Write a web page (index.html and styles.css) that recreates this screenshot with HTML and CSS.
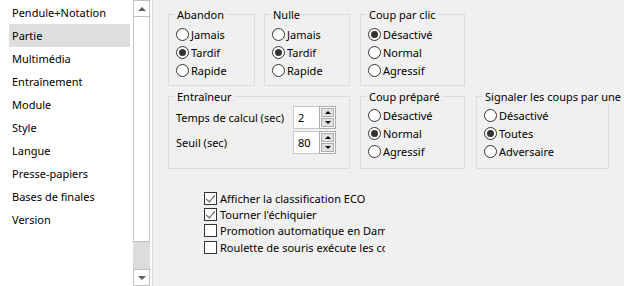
FILE: index.html
```html
<!DOCTYPE html>
<html lang="fr">
<head>
<meta charset="utf-8">
<title>Options</title>
<link rel="stylesheet" href="styles.css">
</head>
<body>
<div class="dialog">
  <div class="listbox">
    <ul class="items">
      <li>Pendule+Notation</li>
      <li class="selected">Partie</li>
      <li>Multimédia</li>
      <li>Entraînement</li>
      <li>Module</li>
      <li>Style</li>
      <li>Langue</li>
      <li>Presse-papiers</li>
      <li>Bases de finales</li>
      <li>Version</li>
    </ul>
    <div class="scrollbar">
      <div class="sb-btn"><span class="tri-up"></span></div>
      <div class="sb-thumb"></div>
      <div class="sb-track"></div>
      <div class="sb-btn"><span class="tri-down"></span></div>
    </div>
  </div>
  <div class="panel">
    <div class="row row1">
      <fieldset class="group w-abandon">
        <legend>Abandon</legend>
        <div class="opt"><span class="radio"></span>Jamais</div>
        <div class="opt"><span class="radio on"></span>Tardif</div>
        <div class="opt"><span class="radio"></span>Rapide</div>
      </fieldset>
      <fieldset class="group w-nulle">
        <legend>Nulle</legend>
        <div class="opt"><span class="radio"></span>Jamais</div>
        <div class="opt"><span class="radio on"></span>Tardif</div>
        <div class="opt"><span class="radio"></span>Rapide</div>
      </fieldset>
      <fieldset class="group w-mid">
        <legend>Coup par clic</legend>
        <div class="opt"><span class="radio on"></span>Désactivé</div>
        <div class="opt"><span class="radio"></span>Normal</div>
        <div class="opt"><span class="radio"></span>Agressif</div>
      </fieldset>
    </div>
    <div class="row row2">
      <fieldset class="group w-coach">
        <legend>Entraîneur</legend>
        <div class="field">
          <span class="field-label">Temps de calcul (sec)</span>
          <div class="spin"><span class="spin-edit">2</span><span class="spin-btns"><span class="spin-b"><span class="s-up"></span></span><span class="spin-b"><span class="s-down"></span></span></span></div>
        </div>
        <div class="field">
          <span class="field-label">Seuil (sec)</span>
          <div class="spin"><span class="spin-edit">80</span><span class="spin-btns"><span class="spin-b"><span class="s-up"></span></span><span class="spin-b"><span class="s-down"></span></span></span></div>
        </div>
      </fieldset>
      <fieldset class="group w-mid">
        <legend>Coup préparé</legend>
        <div class="opt"><span class="radio"></span>Désactivé</div>
        <div class="opt"><span class="radio on"></span>Normal</div>
        <div class="opt"><span class="radio"></span>Agressif</div>
      </fieldset>
      <fieldset class="group w-signal">
        <legend class="wide">Signaler les coups par une</legend>
        <div class="opt"><span class="radio"></span>Désactivé</div>
        <div class="opt"><span class="radio on"></span>Toutes</div>
        <div class="opt"><span class="radio"></span>Adversaire</div>
      </fieldset>
    </div>
    <div class="checks">
      <div class="chk"><span class="box on"></span>Afficher la classification ECO</div>
      <div class="chk"><span class="box on"></span>Tourner l'échiquier</div>
      <div class="chk"><span class="box"></span>Promotion automatique en Dame</div>
      <div class="chk"><span class="box"></span>Roulette de souris exécute les coups</div>
    </div>
  </div>
</div>
</body>
</html>
```
FILE: styles.css
```css
html, body {
  margin: 0;
  padding: 0;
  background: #f0f0f0;
}
body {
  font-family: "Noto Sans", "DejaVu Sans", sans-serif;
  font-size: 11px;
  color: #000;
}
.dialog {
  display: flex;
  width: 624px;
  height: 286px;
  overflow: hidden;
}

/* list box */
.listbox {
  display: flex;
  width: 152px;
  height: 286px;
  background: #fff;
  border-right: 1px solid #d9d9d9;
  box-sizing: content-box;
}
.items {
  list-style: none;
  margin: 0;
  padding: 1px 3px 0 9px;
  width: 133px;
  box-sizing: border-box;
}
.items li {
  height: 23px;
  line-height: 23px;
  padding-left: 3px;
  white-space: nowrap;
}
.items li.selected {
  background: #dedede;
}
.scrollbar {
  display: flex;
  flex-direction: column;
  width: 17px;
  height: 286px;
}
.sb-btn {
  height: 17px;
  border: 1px solid #c2c2c2;
  box-sizing: border-box;
  background: #fff;
  display: flex;
  align-items: center;
  justify-content: center;
}
.sb-thumb {
  height: 225px;
  border: 1px solid #c2c2c2;
  border-top: 0;
  box-sizing: border-box;
  background: #fff;
}
.sb-track {
  flex: 1;
  background: #dcdcdc;
}
.tri-up {
  width: 0; height: 0;
  border-left: 4px solid transparent;
  border-right: 4px solid transparent;
  border-bottom: 4px solid #606060;
}
.tri-down {
  width: 0; height: 0;
  border-left: 4px solid transparent;
  border-right: 4px solid transparent;
  border-top: 4px solid #606060;
}

/* right panel */
.panel {
  flex: 1;
  display: flex;
  flex-direction: column;
  padding: 6px 0 0 15px;
}
.row {
  display: flex;
  align-items: flex-start;
}
.row1 { gap: 9px; }
.row1 .w-nulle { margin-right: 1px; }
.row2 { margin-top: 2px; gap: 10px; }
.row2 .w-mid { margin-right: 1px; }

.group {
  margin: 0;
  border: 1px solid #dcdcdc;
  padding: 2px 4px 0 7px;
  min-width: 0;
  min-inline-size: 0;
  box-sizing: border-box;
}
.row1 .group { height: 80px; }
.row2 .group { height: 81px; padding-top: 1px; }
.group legend {
  padding: 0 2px;
  margin-left: -1px;
  line-height: 17px;
  height: 17px;
  white-space: nowrap;
}
.group legend.wide {
  width: max-content;
}
.w-abandon { width: 87px; }
.w-nulle { width: 86px; }
.w-mid { width: 105px; }
.w-coach { width: 182px; }
.w-signal { width: 133px; overflow: visible; }

.opt {
  display: flex;
  align-items: center;
  height: 18px;
  white-space: nowrap;
}
.radio {
  width: 13px;
  height: 13px;
  box-sizing: border-box;
  border: 1px solid #333;
  border-radius: 50%;
  background: #fff;
  margin-right: 2px;
  flex: none;
  display: flex;
  align-items: center;
  justify-content: center;
}
.radio.on::after {
  content: "";
  width: 7px;
  height: 7px;
  border-radius: 50%;
  background: #333;
}

/* spinner fields */
.w-coach { padding-top: 3px; }
.field {
  display: flex;
  align-items: center;
  height: 23px;
  margin-bottom: 2px;
}
.field-label {
  width: 117px;
  white-space: nowrap;
}
.spin {
  display: flex;
  height: 23px;
}
.spin-edit {
  width: 26px;
  height: 23px;
  box-sizing: border-box;
  background: #fff;
  border: 1px solid #c8c8c8;
  border-right: 0;
  padding-left: 4px;
  line-height: 21px;
}
.spin-btns {
  display: flex;
  flex-direction: column;
  width: 17px;
  height: 23px;
  box-sizing: border-box;
  border: 1px solid #adadad;
  background: #fff;
  padding: 1px;
  gap: 1px;
}
.spin-b {
  flex: 1;
  border: 1px solid #adadad;
  background: #e1e1e1;
  display: flex;
  align-items: center;
  justify-content: center;
}
.s-up {
  width: 0; height: 0;
  border-left: 3px solid transparent;
  border-right: 3px solid transparent;
  border-bottom: 3px solid #000;
}
.s-down {
  width: 0; height: 0;
  border-left: 3px solid transparent;
  border-right: 3px solid transparent;
  border-top: 3px solid #000;
}

/* checkboxes */
.checks {
  margin: 21px 0 0 36px;
  width: 181px;
  overflow: hidden;
}
.chk {
  display: flex;
  align-items: center;
  height: 16.4px;
  white-space: nowrap;
}
.box {
  width: 13px;
  height: 13px;
  box-sizing: border-box;
  border: 1px solid #333;
  background: #fff;
  margin-right: 3px;
  flex: none;
  position: relative;
}
.box.on::after {
  content: "";
  position: absolute;
  left: 3px;
  top: 0px;
  width: 4px;
  height: 8px;
  border-right: 1.3px solid #555;
  border-bottom: 1.3px solid #555;
  transform: rotate(40deg);
}
```
